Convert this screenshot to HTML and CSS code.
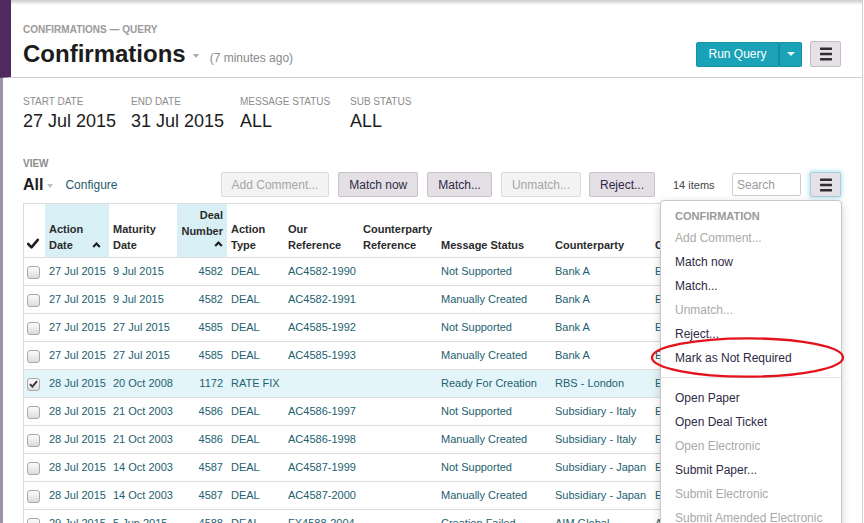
FILE: index.html
```html
<!DOCTYPE html>
<html>
<head>
<meta charset="utf-8">
<title>Confirmations</title>
<link rel="stylesheet" href="styles.css">
</head>
<body>
<div class="page">
  <header class="head">
    <div class="crumb">CONFIRMATIONS — QUERY</div>
    <div class="title-row">
      <div class="title-group">
        <h1>Confirmations</h1>
        <span class="tcaret"></span>
        <span class="ago">(7 minutes ago)</span>
      </div>
      <div class="head-actions">
        <div class="split">
          <button class="run">Run Query</button>
          <button class="run-caret"><span class="wcaret"></span></button>
        </div>
        <button class="hamb">
          <svg width="12" height="14" viewBox="0 0 12 14"><rect x="0" y="0.5" width="12" height="2.6" rx="0.6" fill="#2f2f2f"/><rect x="0" y="5.7" width="12" height="2.6" rx="0.6" fill="#2f2f2f"/><rect x="0" y="10.9" width="12" height="2.6" rx="0.6" fill="#2f2f2f"/></svg>
        </button>
      </div>
    </div>
  </header>

  <main class="main">
    <div class="filters">
      <div class="filter"><div class="flabel">START DATE</div><div class="fval">27 Jul 2015</div></div>
      <div class="filter"><div class="flabel">END DATE</div><div class="fval">31 Jul 2015</div></div>
      <div class="filter"><div class="flabel">MESSAGE STATUS</div><div class="fval">ALL</div></div>
      <div class="filter"><div class="flabel">SUB STATUS</div><div class="fval">ALL</div></div>
    </div>

    <div class="toolbar">
      <div class="view">
        <div class="vlabel">VIEW</div>
        <div class="vrow"><span class="vname">All</span><span class="vcaret"></span><span class="configure">Configure</span></div>
      </div>
      <div class="actions">
        <button class="btn dis">Add Comment...</button>
        <button class="btn">Match now</button>
        <button class="btn">Match...</button>
        <button class="btn dis">Unmatch...</button>
        <button class="btn tight">Reject...</button>
        <span class="count">14 items</span>
        <input class="search" type="text" placeholder="Search">
        <div class="menu-wrap">
          <button class="hamb2">
            <svg width="12" height="14" viewBox="0 0 12 14"><rect x="0" y="0.5" width="12" height="2.6" rx="0.6" fill="#2f2f2f"/><rect x="0" y="5.7" width="12" height="2.6" rx="0.6" fill="#2f2f2f"/><rect x="0" y="10.9" width="12" height="2.6" rx="0.6" fill="#2f2f2f"/></svg>
          </button>
          <div class="menu">
            <div class="menu-head">CONFIRMATION</div>
            <div class="mi dis">Add Comment...</div>
            <div class="mi">Match now</div>
            <div class="mi">Match...</div>
            <div class="mi dis">Unmatch...</div>
            <div class="mi">Reject...</div>
            <div class="mi">Mark as Not Required</div>
            <div class="sep"></div>
            <div class="mi">Open Paper</div>
            <div class="mi">Open Deal Ticket</div>
            <div class="mi dis">Open Electronic</div>
            <div class="mi">Submit Paper...</div>
            <div class="mi dis">Submit Electronic</div>
            <div class="mi dis">Submit Amended Electronic</div>
          </div>
        </div>
      </div>
    </div>

    <div class="table-wrap">
      <table class="grid">
        <colgroup>
          <col class="c-chk"><col class="c-adate"><col class="c-mdate"><col class="c-deal"><col class="c-type"><col class="c-our"><col class="c-cpref"><col class="c-msg"><col class="c-cp"><col class="c-last">
        </colgroup>
        <thead>
          <tr>
            <th class="th-chk"><svg width="12" height="11" viewBox="0 0 12 11"><path d="M1.2 6 L4.5 9.3 L10.8 1.8" fill="none" stroke="#1e1e1e" stroke-width="2.6" stroke-linecap="round" stroke-linejoin="round"/></svg></th>
            <th class="hl">Action<div class="hd-line">Date<svg class="sort" width="9" height="6" viewBox="0 0 9 6"><path d="M1.2 5 L4.5 1.6 L7.8 5" fill="none" stroke="#1e1e1e" stroke-width="2.2" stroke-linejoin="miter"/></svg></div></th>
            <th>Maturity<br>Date</th>
            <th class="hl num">Deal<br>Number<div class="sort-line"><svg class="sort" width="9" height="6" viewBox="0 0 9 6"><path d="M1.2 5 L4.5 1.6 L7.8 5" fill="none" stroke="#1e1e1e" stroke-width="2.2"/></svg></div></th>
            <th>Action<br>Type</th>
            <th>Our<br>Reference</th>
            <th>Counterparty<br>Reference</th>
            <th>Message Status</th>
            <th>Counterparty</th>
            <th>Currency</th>
          </tr>
        </thead>
        <tbody>
          <tr><td><span class="cb"></span></td><td>27 Jul 2015</td><td>9 Jul 2015</td><td class="num">4582</td><td>DEAL</td><td>AC4582-1990</td><td></td><td>Not Supported</td><td>Bank A</td><td>EUR</td></tr>
          <tr><td><span class="cb"></span></td><td>27 Jul 2015</td><td>9 Jul 2015</td><td class="num">4582</td><td>DEAL</td><td>AC4582-1991</td><td></td><td>Manually Created</td><td>Bank A</td><td>EUR</td></tr>
          <tr><td><span class="cb"></span></td><td>27 Jul 2015</td><td>27 Jul 2015</td><td class="num">4585</td><td>DEAL</td><td>AC4585-1992</td><td></td><td>Not Supported</td><td>Bank A</td><td>EUR</td></tr>
          <tr><td><span class="cb"></span></td><td>27 Jul 2015</td><td>27 Jul 2015</td><td class="num">4585</td><td>DEAL</td><td>AC4585-1993</td><td></td><td>Manually Created</td><td>Bank A</td><td>EUR</td></tr>
          <tr class="sel"><td><span class="cb on"><svg width="9" height="8" viewBox="0 0 9 8"><path d="M1 4.2 L3.4 6.6 L8 1.2" fill="none" stroke="#333" stroke-width="1.9"/></svg></span></td><td>28 Jul 2015</td><td>20 Oct 2008</td><td class="num">1172</td><td>RATE FIX</td><td></td><td></td><td>Ready For Creation</td><td>RBS - London</td><td>EUR</td></tr>
          <tr><td><span class="cb"></span></td><td>28 Jul 2015</td><td>21 Oct 2003</td><td class="num">4586</td><td>DEAL</td><td>AC4586-1997</td><td></td><td>Not Supported</td><td>Subsidiary - Italy</td><td>EUR</td></tr>
          <tr><td><span class="cb"></span></td><td>28 Jul 2015</td><td>21 Oct 2003</td><td class="num">4586</td><td>DEAL</td><td>AC4586-1998</td><td></td><td>Manually Created</td><td>Subsidiary - Italy</td><td>EUR</td></tr>
          <tr><td><span class="cb"></span></td><td>28 Jul 2015</td><td>14 Oct 2003</td><td class="num">4587</td><td>DEAL</td><td>AC4587-1999</td><td></td><td>Not Supported</td><td>Subsidiary - Japan</td><td>EUR</td></tr>
          <tr><td><span class="cb"></span></td><td>28 Jul 2015</td><td>14 Oct 2003</td><td class="num">4587</td><td>DEAL</td><td>AC4587-2000</td><td></td><td>Manually Created</td><td>Subsidiary - Japan</td><td>EUR</td></tr>
          <tr><td><span class="cb"></span></td><td>29 Jul 2015</td><td>5 Jun 2015</td><td class="num">4588</td><td>DEAL</td><td>FX4588-2004</td><td></td><td>Creation Failed</td><td>AIM Global</td><td>AUD</td></tr>
        </tbody>
      </table>
    </div>
  </main>

  <svg class="annot" width="196" height="44" viewBox="0 0 196 44"><ellipse cx="97.5" cy="21.5" rx="95.5" ry="19.2" fill="none" stroke="#e3121c" stroke-width="2.3"/></svg>
</div>
</body>
</html>
```

FILE: styles.css
```css
html, body {
  margin: 0;
  padding: 0;
  overflow: hidden;
}
body {
  font-family: "Liberation Sans", Arial, sans-serif;
  color: #222;
  background: #fff;
}
button, input {
  font-family: "Liberation Sans", Arial, sans-serif;
}

.page {
  position: relative;
  width: 863px;
  height: 523px;
  box-sizing: border-box;
  border-right: 1px solid #cfcfcf;
  display: flex;
  flex-direction: column;
}

/* header */
.head {
  border-left: 11px solid #4e2a5e;
  border-bottom: 1px solid #cfcfcf;
  background: linear-gradient(#cbcbcb, #ffffff 5px);
  padding: 24px 21px 8px 12px;
}
.crumb {
  font-size: 10px;
  font-weight: bold;
  color: #9a9a9a;
  line-height: 12px;
}
.title-row {
  display: flex;
  align-items: center;
  margin-top: 3px;
  height: 30px;
}
.title-group {
  display: flex;
  align-items: baseline;
}
h1 {
  margin: 0;
  font-size: 24px;
  line-height: 30px;
  font-weight: bold;
  color: #1c1c1c;
}
.tcaret {
  align-self: center;
  margin-left: 7px;
  margin-top: 3px;
  width: 0;
  height: 0;
  border-top: 4px solid #a8a8a8;
  border-left: 3.5px solid transparent;
  border-right: 3.5px solid transparent;
}
.ago {
  font-size: 12px;
  color: #8a8a8a;
  margin-left: 11px;
}
.head-actions {
  margin-left: auto;
  display: flex;
  align-items: center;
  gap: 8px;
}
.split {
  display: flex;
}
.run {
  height: 25px;
  width: 83px;
  background: #19a2b8;
  color: #fff;
  border: 1px solid #1590a4;
  border-radius: 2px 0 0 2px;
  font-size: 12px;
  padding: 0;
}
.run-caret {
  height: 25px;
  width: 23px;
  background: #19a2b8;
  border: 1px solid #1590a4;
  border-left: 1px solid #12889b;
  border-radius: 0 2px 2px 0;
  padding: 0;
  display: flex;
  align-items: center;
  justify-content: center;
}
.wcaret {
  width: 0;
  height: 0;
  border-top: 4px solid #e8f7fa;
  border-left: 4px solid transparent;
  border-right: 4px solid transparent;
}
.hamb, .hamb2 {
  width: 31px;
  height: 26px;
  background: #e5e1e6;
  border: 1px solid #c3bfc5;
  border-radius: 2px;
  padding: 0;
  display: flex;
  align-items: center;
  justify-content: center;
}
.hamb2 {
  height: 25px;
  border-color: #a9cfd8;
  box-shadow: 0 0 4px 1px rgba(110, 200, 225, 0.55);
}

/* main */
.main {
  flex: 1;
  border-left: 3px solid #9e93a6;
  padding: 18px 21px 0 20px;
}
.filters {
  display: grid;
  grid-template-columns: 108px 109px 110px auto;
}
.flabel {
  font-size: 10px;
  line-height: 12px;
  color: #8c8c8c;
}
.fval {
  margin-top: 2px;
  font-size: 18px;
  line-height: 22px;
  color: #1c1c1c;
}

.toolbar {
  display: flex;
  align-items: flex-end;
  margin-top: 26px;
}
.vlabel {
  font-size: 10px;
  line-height: 12px;
  font-weight: bold;
  color: #8c8c8c;
  margin-bottom: 2px;
}
.vrow {
  display: flex;
  align-items: center;
  height: 25px;
}
.vname {
  font-size: 16px;
  font-weight: bold;
  color: #1c1c1c;
}
.vcaret {
  margin-left: 4px;
  margin-top: 2px;
  width: 0;
  height: 0;
  border-top: 4px solid #c0c0c0;
  border-left: 3.5px solid transparent;
  border-right: 3.5px solid transparent;
}
.configure {
  margin-left: 12px;
  font-size: 12px;
  color: #1f5a6c;
}
.actions {
  margin-left: auto;
  display: flex;
  align-items: center;
}
.btn {
  height: 25px;
  padding: 0 10px;
  font-size: 12px;
  color: #2f2a45;
  background: #e3dfe4;
  border: 1px solid #c6c2c8;
  border-radius: 2px;
}
.btn + .btn {
  margin-left: 9px;
}
.btn.tight {
  margin-left: 8px;
}
.btn.dis {
  color: #a6a6a6;
  background: #f3f3f3;
  border-color: #dcdcdc;
}
.count {
  margin-left: 18px;
  width: 40px;
  white-space: nowrap;
  font-size: 11px;
  color: #444;
}
.search {
  margin-left: 19px;
  width: 69px;
  height: 23px;
  box-sizing: border-box;
  border: 1px solid #cfcfcf;
  border-radius: 2px;
  padding: 0 4px;
  font-size: 12px;
  color: #333;
  outline: none;
}
.search::placeholder {
  color: #9b9b9b;
}
.menu-wrap {
  position: relative;
  margin-left: 9px;
}

/* dropdown menu */
.menu {
  position: absolute;
  top: 28px;
  right: -1px;
  width: 182px;
  box-sizing: border-box;
  background: #fff;
  border: 1px solid #c8c8c8;
  border-radius: 4px;
  box-shadow: 0 3px 10px rgba(0, 0, 0, 0.18);
  padding: 5px 0 12px;
  z-index: 10;
  font-size: 12px;
}
.menu-head {
  padding-left: 14px;
  line-height: 20px;
  font-size: 11px;
  font-weight: bold;
  color: #9a9a9a;
}
.mi {
  padding-left: 14px;
  line-height: 24px;
  color: #2f2a45;
  white-space: nowrap;
}
.mi.dis {
  color: #a9a9a9;
}
.sep {
  height: 1px;
  background: #e3e3e3;
  margin: 7px 0 8px;
}

/* table */
.table-wrap {
  margin-top: 6px;
  width: 818px;
  box-sizing: border-box;
  border-left: 1px solid #dcdcdc;
  border-top: 1px solid #dcdcdc;
  overflow: hidden;
}
.grid {
  width: 817px;
  table-layout: fixed;
  border-collapse: separate;
  border-spacing: 0;
  font-size: 11px;
}
.c-chk { width: 21px; }
.c-adate { width: 64px; }
.c-mdate { width: 68px; }
.c-deal { width: 50px; }
.c-type { width: 57px; }
.c-our { width: 75px; }
.c-cpref { width: 78px; }
.c-msg { width: 114px; }
.c-cp { width: 100px; }
.c-last { width: 190px; }

.grid th {
  text-align: left;
  vertical-align: bottom;
  font-weight: bold;
  color: #2b2b2b;
  line-height: 16px;
  padding: 3px 4px 4px;
  border-bottom: 1px solid #dcdcdc;
  white-space: nowrap;
}
.grid th.hl {
  background: #d8f0f5;
}
.grid th.th-chk {
  padding-left: 3px;
  padding-bottom: 6px;
  line-height: 11px;
}
.grid th.num {
  text-align: right;
}
.hd-line {
  display: flex;
  align-items: center;
  justify-content: space-between;
  padding-right: 4px;
}
.sort-line {
  height: 14px;
  line-height: 0;
  padding-top: 2px;
  box-sizing: border-box;
}
.sort {
  display: inline-block;
}
.grid td {
  line-height: 27px;
  padding: 0 4px;
  border-bottom: 1px solid #dcdcdc;
  color: #22616f;
  white-space: nowrap;
  overflow: hidden;
}
.grid td.num {
  text-align: right;
}
.grid td:first-child {
  padding-left: 3px;
}
.grid tr.sel td {
  background: #e4f5fa;
}
.cb {
  display: inline-flex;
  align-items: center;
  justify-content: center;
  width: 11px;
  height: 11px;
  border: 1px solid #a8a8a8;
  border-radius: 3px;
  background: linear-gradient(#fbfbfb, #dcdcdc);
  vertical-align: middle;
}

.annot {
  position: absolute;
  left: 650px;
  top: 336px;
  z-index: 20;
}
```
